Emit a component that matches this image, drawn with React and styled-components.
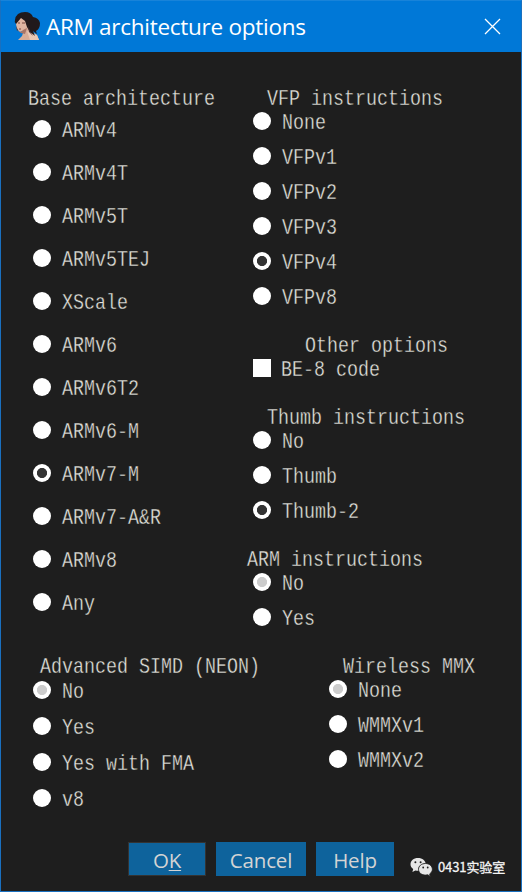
import React, { useState } from "react";
import styled, { createGlobalStyle, css } from "styled-components";

const GlobalStyle = createGlobalStyle`
  * { box-sizing: border-box; }
  body { margin: 0; background: #1e1e1e; }
`;

const Dialog = styled.div`
  width: 522px;
  height: 892px;
  display: flex;
  flex-direction: column;
  background: #1e1e1e;
  border: 1px solid #1a70bf;
  border-top-color: #1883d9;
  overflow: hidden;
`;

const TitleBar = styled.header`
  flex: none;
  height: 51px;
  display: flex;
  align-items: center;
  padding: 0 20px 0 12px;
  background: #0078d7;
`;

const Title = styled.h1`
  flex: 1;
  margin: 0 0 0 6px;
  font: 400 22.5px/30px "Open Sans", "Noto Sans", sans-serif;
  letter-spacing: -0.27px;
  color: #fff;
  white-space: nowrap;
`;

const CloseButton = styled.button`
  display: flex;
  padding: 0;
  border: 0;
  background: none;
`;

const Content = styled.main`
  flex: 1;
  padding: 36px 0 0 27px;
`;

const Columns = styled.div`
  display: grid;
  grid-template-columns: ${(p) => p.$columns};
  margin-top: ${(p) => p.$top || 0}px;
  align-items: start;
`;

const Stack = styled.div`
  display: flex;
  flex-direction: column;
  gap: 30px;
`;

const narrowType = css`
  font-family: "Liberation Mono", monospace;
  font-size: 22px;
  font-weight: 400;
  color: #e2e2dc;
  -webkit-text-stroke: 0.35px #1e1e1e;
  white-space: pre;
  transform: scaleX(0.8333);
  transform-origin: left center;
`;

const Group = styled.section`
  min-width: 0;
`;

const Heading = styled.h2`
  ${narrowType}
  width: max-content;
  height: 22px;
  line-height: 24px;
  margin: 0 0 ${(p) => p.$bottom}px ${(p) => p.$indent}px;
`;

const Options = styled.div`
  display: flex;
  flex-direction: column;
  gap: ${(p) => p.$gap}px;
  padding-left: 5px;
`;

const Option = styled.label`
  display: flex;
  align-items: center;
  gap: ${(p) => p.$gap || 11}px;
  height: 18px;
`;

const Caption = styled.span`
  ${narrowType}
  line-height: 18px;
  padding-top: 6px;
`;

const Radio = styled.input.attrs({ type: "radio" })`
  appearance: none;
  flex: none;
  width: 18px;
  height: 18px;
  margin: 0;
  border-radius: 50%;
  background: #fff;
  &:checked {
    background: radial-gradient(circle, ${(p) => (p.$muted ? "#cccccc" : "#333333")} 4.7px, #fff 5.4px);
  }
`;

const Checkbox = styled.input.attrs({ type: "checkbox" })`
  appearance: none;
  flex: none;
  width: 18px;
  height: 18px;
  margin: 0;
  background: #fff;
`;

const Footer = styled.footer`
  display: flex;
  align-items: flex-start;
  gap: 10px;
  margin: 35px 0 0 100px;
`;

const Button = styled.button`
  width: ${(p) => p.$width}px;
  height: 34px;
  padding: 1px 0 0;
  border: ${(p) => (p.$outlined ? "1px solid #333" : "0")};
  background: #0e639c;
  color: #d4d4d4;
  font: 400 20.5px/30px "Open Sans", "Noto Sans", sans-serif;
  letter-spacing: -0.15px;
`;

const Underlined = styled.span`
  text-decoration: underline;
  text-decoration-thickness: 1px;
  text-underline-offset: 2px;
`;

const Signature = styled.div`
  display: flex;
  align-items: center;
  gap: 5px;
  margin: 14px 0 0 6px;
  height: 22px;
  color: #f4f4f4;
  font: 400 13px/20px "Noto Sans CJK SC", sans-serif;
  letter-spacing: -0.1px;
  -webkit-text-stroke: 0.3px #f4f4f4;
  white-space: nowrap;
`;

function Portrait() {
  return (
    <svg width="27" height="29" viewBox="0 0 27 29">
      <path d="M6 16 10 21 9 24 5 28H26L24 23 16 18 14 13Z" fill="#d8ad98" />
      <path d="M14 19 24 23 26 28H17Z" fill="#e8c7b4" />
      <path d="M5 6 3 12 4 17 7 20 11 18 15 14 14 6 8 4Z" fill="#dfb5a2" />
      <path d="M4 18 8 20 10 18 14 16 12 22 8 21Z" fill="#a97566" />
      <path d="M2 8Q3 0 12 0Q18 0 20 5Q26 6 27 11Q27 17 23 19L24 22 20 19 22 24 17 20 14 15 12 9 8 6 3 12Q1 10 2 8Z" fill="#20191b" />
      <path d="M15 13 17 19 20 24 16 20Z" fill="#493033" />
      <path d="M5 11h2M9 11h3M6 17h2" stroke="#77463f" strokeWidth="1" />
      <path d="M3 14 5 18 4 19Z" fill="#55322f" />
    </svg>
  );
}

function CloseIcon() {
  return (
    <svg width="17" height="17" viewBox="0 0 17 17">
      <path d="M1 1 16 16M16 1 1 16" stroke="#fff" strokeWidth="1.3" />
    </svg>
  );
}

function ChatIcon() {
  return (
    <svg width="23" height="21" viewBox="0 0 23 21">
      <path d="M8 1C3.6 1 .5 3.7.5 7.2c0 2 1 3.7 2.7 4.8L2.4 15l3-1.6c.9.2 1.7.3 2.6.3 4.4 0 7.7-2.8 7.7-6.4S12.4 1 8 1Z" fill="#e6e6e6" />
      <path d="M15.5 6.5c-4 0-7 2.5-7 5.8s3 5.8 7 5.8c.8 0 1.6-.1 2.3-.3l2.5 1.7-.6-2.6c1.7-1.1 2.7-2.7 2.7-4.6 0-3.3-3-5.8-6.9-5.8Z" fill="#e6e6e6" stroke="#1e1e1e" strokeWidth=".9" />
      <g fill="#1e1e1e">
        <circle cx="5.4" cy="5.2" r="1" />
        <circle cx="10.6" cy="5.2" r="1" />
        <circle cx="13.2" cy="10.5" r=".9" />
        <circle cx="17.7" cy="10.5" r=".9" />
      </g>
    </svg>
  );
}

function RadioGroup({ title, indent, bottom = 2, gap = 17, items, initial, muted }) {
  const [value, setValue] = useState(initial);
  return (
    <Group>
      <Heading $indent={indent} $bottom={bottom}>{title}</Heading>
      <Options $gap={gap}>
        {items.map((item) => (
          <Option key={item}>
            <Radio name={title} checked={value === item} onChange={() => setValue(item)} $muted={muted} />
            <Caption>{item}</Caption>
          </Option>
        ))}
      </Options>
    </Group>
  );
}

const BASE = ["ARMv4", "ARMv4T", "ARMv5T", "ARMv5TEJ", "XScale", "ARMv6", "ARMv6T2", "ARMv6-M", "ARMv7-M", "ARMv7-A&R", "ARMv8", "Any"];

export default function App() {
  return (
    <>
      <GlobalStyle />
      <Dialog>
        <TitleBar>
          <Portrait />
          <Title>ARM architecture options</Title>
          <CloseButton aria-label="Close"><CloseIcon /></CloseButton>
        </TitleBar>
        <Content>
          <Columns $columns="220px 260px">
            <RadioGroup title="Base architecture" indent={0} bottom={10} gap={25} items={BASE} initial="ARMv7-M" />
            <Stack>
              <RadioGroup title="VFP instructions" indent={19} items={["None", "VFPv1", "VFPv2", "VFPv3", "VFPv4", "VFPv8"]} initial="VFPv4" />
              <Group>
                <Heading $indent={57} $bottom={2}>Other options</Heading>
                <Options>
                  <Option $gap={10}>
                    <Checkbox />
                    <Caption>BE-8 code</Caption>
                  </Option>
                </Options>
              </Group>
              <RadioGroup title="Thumb instructions" indent={19} items={["No", "Thumb", "Thumb-2"]} initial="Thumb-2" />
              <RadioGroup title="ARM instructions" indent={-1} items={["No", "Yes"]} initial="No" muted />
            </Stack>
          </Columns>
          <Columns $columns="296px 190px" $top={30}>
            <RadioGroup title="Advanced SIMD (NEON)" indent={12} bottom={3} gap={18} items={["No", "Yes", "Yes with FMA", "v8"]} initial="No" muted />
            <RadioGroup title="Wireless MMX" indent={19} items={["None", "WMMXv1", "WMMXv2"]} initial="None" muted />
          </Columns>
          <Footer>
            <Button $width={78} $outlined>O<Underlined>K</Underlined></Button>
            <Button $width={90}>Cancel</Button>
            <Button $width={78}>Help</Button>
            <Signature><ChatIcon /><span>0431实验室</span></Signature>
          </Footer>
        </Content>
      </Dialog>
    </>
  );
}
